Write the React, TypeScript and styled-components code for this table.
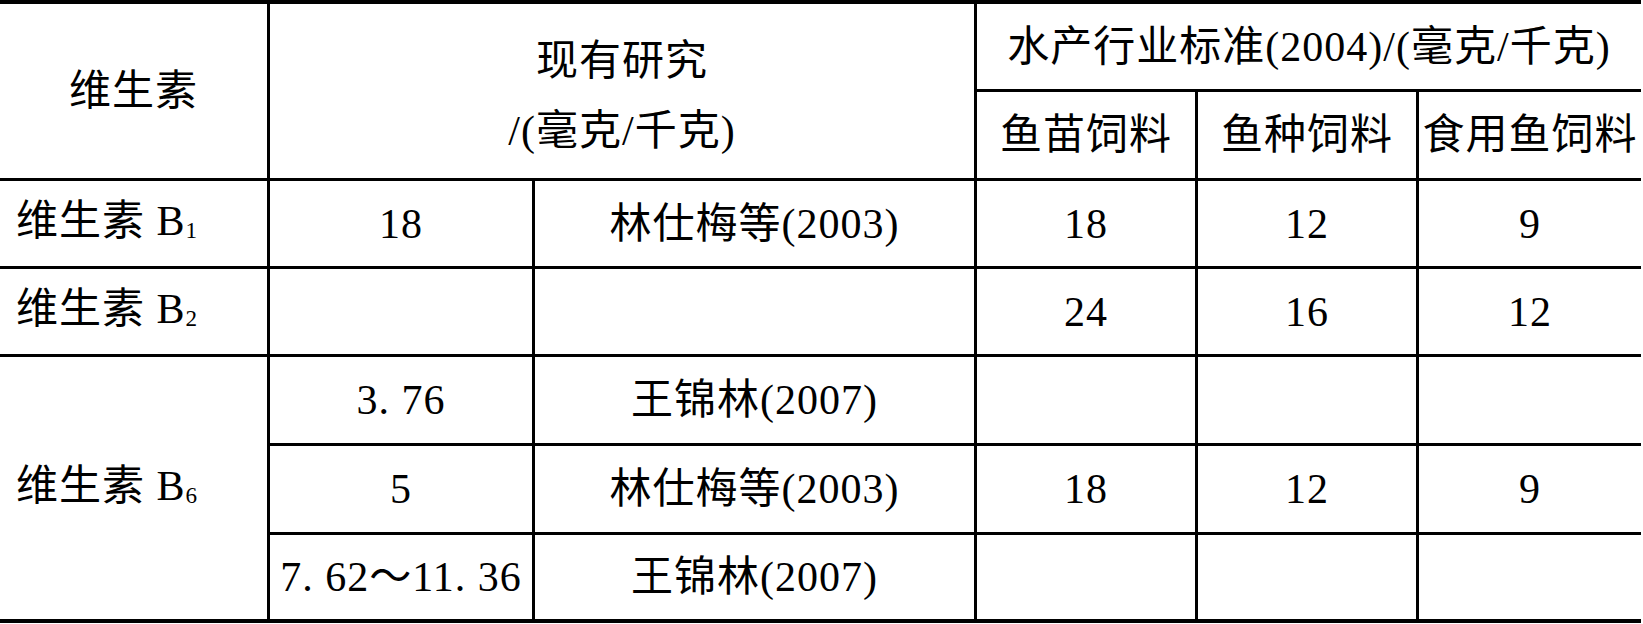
import React from 'react';
import styled, {createGlobalStyle} from 'styled-components';

const GlobalStyle = createGlobalStyle`
  html, body {
    margin: 0;
    padding: 0;
    background: #ffffff;
  }

  #root {
    width: 1643px;
    height: 624px;
    overflow: hidden;
  }
`;

// grid gaps on a black ground make the rules of the table
const Sheet = styled.div`
  display: grid;
  width: 1641px;
  grid-template-columns: 267px 262px 439px 218px 218px 222px;
  grid-template-rows: 85px 86px 85px 85px 86px 86px 84px;
  gap: 3px;
  padding: 4px 0 4px 0;
  background-color: #000000;
  font-family: "Liberation Serif", "Noto Sans CJK SC", serif;
  font-size: 42px;
  letter-spacing: 1px;
  color: #000000;
`;

const Cell = styled.div<{ $left?: boolean; $cols?: number; $rows?: number }>`
  display: flex;
  align-items: center;
  justify-content: ${({$left}) => ($left ? 'flex-start' : 'center')};
  padding-left: ${({$left}) => ($left ? '16px' : '0')};
  grid-column: span ${({$cols}) => $cols ?? 1};
  grid-row: span ${({$rows}) => $rows ?? 1};
  background-color: #ffffff;
  white-space: nowrap;
  line-height: 1;
`;

const HeadLines = styled.div`
  text-align: center;
  line-height: 70px;
  padding-top: 10px;
`;

const Label = styled.span`
  display: inline-block;
  padding-bottom: 4px;
`;

const Sub = styled.span`
  font-size: 0.55em;
  vertical-align: -0.14em;
  letter-spacing: 0;
`;

type Row = {
    label?: React.ReactNode;
    labelRows?: number;
    values: string[];
};

const vitamin = (n: string) => (
    <Label>维生素 B<Sub>{n}</Sub></Label>
);

const rows: Row[] = [
    {label: vitamin('1'), values: ['18', '林仕梅等(2003)', '18', '12', '9']},
    {label: vitamin('2'), values: ['', '', '24', '16', '12']},
    {label: vitamin('6'), labelRows: 3, values: ['3. 76', '王锦林(2007)', '', '', '']},
    {values: ['5', '林仕梅等(2003)', '18', '12', '9']},
    {values: ['7. 62～11. 36', '王锦林(2007)', '', '', '']},
];

const feeds = ['鱼苗饲料', '鱼种饲料', '食用鱼饲料'];

const App = () => {
    return (
        <>
            <GlobalStyle/>
            <Sheet>
                <Cell $rows={2}>维生素</Cell>
                <Cell $cols={2} $rows={2}>
                    <HeadLines>
                        <div>现有研究</div>
                        <div>/(毫克/千克)</div>
                    </HeadLines>
                </Cell>
                <Cell $cols={3}>水产行业标准(2004)/(毫克/千克)</Cell>
                {feeds.map((name) => (
                    <Cell key={name}>{name}</Cell>
                ))}

                {rows.map(({label, labelRows, values}, key) => (
                    <React.Fragment key={key}>
                        {label && <Cell $left $rows={labelRows}>{label}</Cell>}
                        {values.map((value, i) => (
                            <Cell key={i}>{value}</Cell>
                        ))}
                    </React.Fragment>
                ))}
            </Sheet>
        </>
    );
};

export default App;
